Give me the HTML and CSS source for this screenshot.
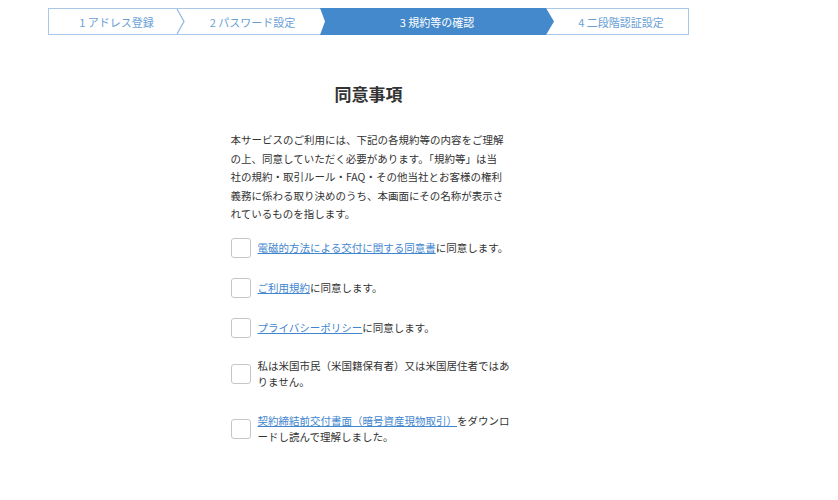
FILE: index.html
```html
<!DOCTYPE html>
<html lang="ja">
<head>
    <meta charset="UTF-8">
    <meta name="viewport" content="width=device-width, initial-scale=1.0">
    <title>同意事項</title>
    <link rel="stylesheet" href="styles.css">
</head>
<body>
    <div class="page">
        <!-- Progress steps -->
        <ol class="steps">
            <li class="step step-1">1 アドレス登録</li>
            <li class="sep">
                <svg width="9" height="25" viewBox="0 0 9 25"><polyline points="1,0 8,12.5 1,25" fill="none" stroke="#8fb6df" stroke-width="1.2"/></svg>
            </li>
            <li class="step step-2">2 パスワード設定</li>
            <li class="step step-3 current">3 規約等の確認</li>
            <li class="step step-4">4 二段階認証設定</li>
        </ol>

        <!-- Agreement -->
        <div class="agree">
            <h2>同意事項</h2>
            <p class="lead">本サービスのご利用には、下記の各規約等の内容をご理解<br>の上、同意していただく必要があります。「規約等」は当<br>社の規約・取引ルール・FAQ・その他当社とお客様の権利<br>義務に係わる取り決めのうち、本画面にその名称が表示さ<br>れているものを指します。</p>

            <ul class="checks">
                <li class="check">
                    <span class="box"></span>
                    <span class="label"><a href="#">電磁的方法による交付に関する同意書</a>に同意します。</span>
                </li>
                <li class="check">
                    <span class="box"></span>
                    <span class="label"><a href="#">ご利用規約</a>に同意します。</span>
                </li>
                <li class="check">
                    <span class="box"></span>
                    <span class="label"><a href="#">プライバシーポリシー</a>に同意します。</span>
                </li>
                <li class="check">
                    <span class="box"></span>
                    <span class="label">私は米国市民（米国籍保有者）又は米国居住者ではあ<br>りません。</span>
                </li>
                <li class="check check-last">
                    <span class="box"></span>
                    <span class="label"><a href="#">契約締結前交付書面（暗号資産現物取引）</a>をダウンロ<br>ードし読んで理解しました。</span>
                </li>
            </ul>
        </div>
    </div>
</body>
</html>
```

FILE: styles.css
```css
body {
    font-family: "Noto Sans CJK JP", "Noto Sans", sans-serif;
    background-color: #fff;
    color: #333;
    margin: 0;
    padding: 8px 0 0 48px;
}
.page {
    width: 641px;
}
.steps {
    display: flex;
    list-style: none;
    margin: 0;
    padding: 0;
    height: 25px;
    border: 1px solid #a9c8e8;
}
.step {
    display: flex;
    align-items: center;
    justify-content: center;
    font-size: 11px;
    color: #6a9fd4;
}
.step-1 { width: 127px; padding-left: 8px; box-sizing: border-box; }
.step-2 { width: 135px; }
.step-3 { width: 234px; }
.step-4 { width: 134px; }
.sep {
    width: 9px;
    display: flex;
}
.current {
    background-color: #4489cb;
    color: #fff;
    clip-path: polygon(0 0, calc(100% - 8px) 0, 100% 50%, calc(100% - 8px) 100%, 0 100%, 5px 50%);
    margin: -1px 0;
    height: 27px;
}
.agree {
    width: 276px;
    margin: 0 auto;
}
h2 {
    text-align: center;
    font-size: 17px;
    font-weight: bold;
    color: #333;
    margin: 47px 0 0;
    line-height: 24px;
}
.lead {
    font-size: 10.5px;
    line-height: 18.5px;
    margin: 25px 0 0;
    white-space: nowrap;
}
.checks {
    list-style: none;
    margin: 14px 0 0;
    padding: 0;
    display: flex;
    flex-direction: column;
    gap: 20px;
}
.check {
    display: flex;
    align-items: center;
    gap: 7px;
    min-height: 20px;
}
.check-last {
    margin-top: 3px;
}
.box {
    flex: none;
    width: 18px;
    height: 18px;
    border: 1px solid #c6c6c6;
    border-radius: 3px;
}
.label {
    font-size: 10.5px;
    line-height: 16px;
    white-space: nowrap;
}
.label a {
    color: #3f86cf;
    text-decoration: underline;
}
```
